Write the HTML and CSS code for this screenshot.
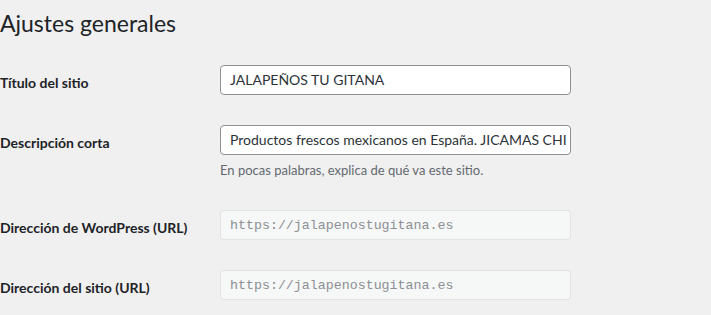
FILE: index.html
```html
<!DOCTYPE html>
<html lang="es"><head><meta charset="utf-8"><title>Ajustes generales</title><link rel="stylesheet" href="styles.css"></head>
<body>
<div class="wrap">
  <h1 class="page-title">Ajustes generales</h1>
  <form class="form-table">
    <div class="row">
      <label class="label" for="blogname">Título del sitio</label>
      <div class="field"><input class="text-input" id="blogname" type="text" value="JALAPEÑOS TU GITANA"></div>
    </div>
    <div class="row">
      <label class="label" for="blogdescription">Descripción corta</label>
      <div class="field">
        <input class="text-input" id="blogdescription" type="text" value="Productos frescos mexicanos en España. JICAMAS CHILES NOPALES TOMATILLOS">
        <p class="description">En pocas palabras, explica de qué va este sitio.</p>
      </div>
    </div>
    <div class="row">
      <label class="label" for="siteurl">Dirección de WordPress (URL)</label>
      <div class="field"><input class="text-input code" id="siteurl" type="url" value="https://jalapenostugitana.es" disabled></div>
    </div>
    <div class="row">
      <label class="label" for="home">Dirección del sitio (URL)</label>
      <div class="field"><input class="text-input code" id="home" type="url" value="https://jalapenostugitana.es" disabled></div>
    </div>
  </form>
</div>
</body></html>
```
FILE: styles.css
```css
html, body { margin: 0; padding: 0; }
body {
  background: #f0f0f1;
  color: #1d2327;
  font-family: Lato, "Noto Sans", sans-serif;
  font-size: 14px;
}
.wrap { padding: 0; }
.page-title {
  font-size: 23px;
  font-weight: 400;
  line-height: 1.3;
  margin: 0;
  padding: 9px 0 4px;
  color: #1d2327;
}
.form-table { margin-top: 7px; display: block; }
.row {
  display: grid;
  grid-template-columns: 210px 1fr;
  padding: 15px 0;
}
.label {
  font-weight: 700;
  line-height: 1.3;
  padding-top: 9px;
  color: #1d2327;
}
.field { padding-left: 10px; }
.text-input {
  box-sizing: border-box;
  width: 351px;
  height: 30px;
  padding: 0 3px 0 9px;
  margin: 0;
  border: 1px solid #8c8f94;
  border-radius: 4px;
  background: #fff;
  color: #2c3338;
  font-family: Lato, "Noto Sans", sans-serif;
  font-size: 14px;
  display: block;
}
.text-input.code {
  font-family: "Liberation Mono", monospace;
  font-size: 13.3px;
  background: #f6f7f7;
  border-color: rgba(220, 220, 222, 0.75);
  color: #8c8f94;
}
.description {
  margin: 6px 0 0;
  font-size: 13px;
  line-height: 1.5;
  color: #646970;
}
```
